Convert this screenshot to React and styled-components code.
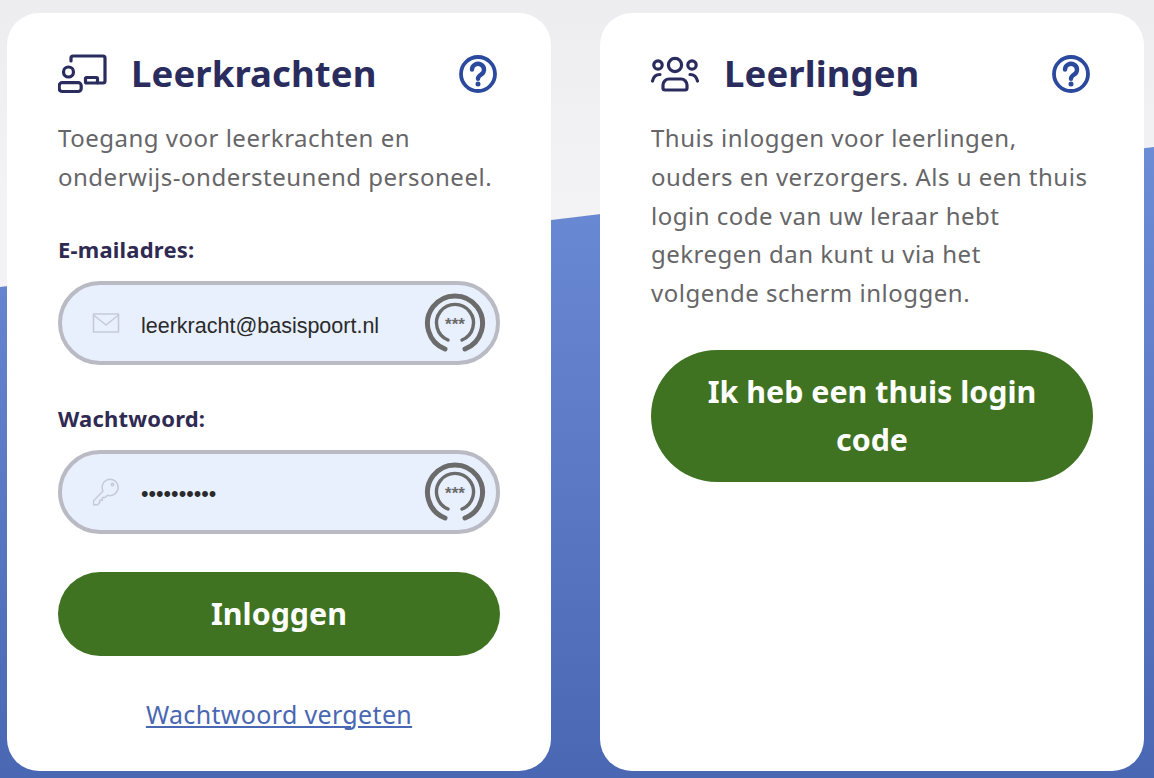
import React from "react";
import styled, { createGlobalStyle } from "styled-components";

const Global = createGlobalStyle`
  html, body { margin: 0; padding: 0; height: 100%; overflow: hidden; }
  * { box-sizing: border-box; }
  body { font-family: "Noto Sans", "Open Sans", sans-serif; background: #f1f1f4; }
`;

const Page = styled.main`
  position: relative;
  width: 1154px;
  height: 778px;
  padding: 13px 10px 7px 7px;
  display: grid;
  grid-template-columns: 544px 544px;
  column-gap: 49px;
  overflow: hidden;
  background: linear-gradient(180deg, #ededf0 0, #f3f3f6 200px);
  &::before {
    content: "";
    position: absolute;
    inset: 0;
    background: linear-gradient(180deg, #6d8cd6 147px, #4a67b3 778px);
    clip-path: polygon(0 287px, 1154px 147px, 1154px 778px, 0 778px);
  }
`;

const Card = styled.section`
  position: relative;
  background: #fff;
  border-radius: 32px;
  padding: 0 53px 0 51px;
  height: 758px;
`;

const Header = styled.header`
  height: 106px;
  display: flex;
  align-items: center;
  padding-top: 16px;
`;

const IconSlot = styled.span`
  width: 73px;
  flex: none;
  display: flex;
`;

const Title = styled.h2`
  flex: 1;
  margin: -2px 0 0;
  font-size: 36.5px;
  font-weight: 700;
  color: #2a2c5e;
  white-space: nowrap;
  letter-spacing: 0.1px;
`;

const Text = styled.p`
  margin: 0;
  font-size: 24px;
  line-height: 38.8px;
  color: #666668;
  white-space: nowrap;
  letter-spacing: 0.5px;
`;

const Label = styled.label`
  display: block;
  font-size: 22px;
  font-weight: 700;
  line-height: 30px;
  color: #2f2a52;
  margin-bottom: 17px;
  margin-top: ${(p) => p.$mt}px;
  letter-spacing: 0.2px;
`;

const Field = styled.div`
  height: 84px;
  width: 442px;
  border: 4px solid #b9bac4;
  border-radius: 42px;
  background: #e8f0fe;
  display: flex;
  align-items: center;
  padding: 0 9px 0 30px;
`;

const Input = styled.input`
  flex: 1;
  min-width: 0;
  margin-left: 21px;
  border: 0;
  outline: 0;
  background: transparent;
  padding: ${(p) => p.$top}px 0 0;
  font-family: "Liberation Sans", Arial, sans-serif;
  font-size: 21.5px;
  color: #2a2a2a;
`;

const PrimaryButton = styled.button`
  display: block;
  width: 442px;
  height: ${(p) => p.$h}px;
  margin-top: ${(p) => p.$mt}px;
  border: 0;
  border-radius: ${(p) => p.$h / 2}px;
  background: #3f7321;
  color: #fff;
  font-family: inherit;
  font-size: 30.4px;
  font-weight: 700;
  line-height: 48px;
  padding: 0 40px;
`;

const Forgot = styled.a`
  display: block;
  width: 442px;
  margin-top: 41px;
  text-align: center;
  font-size: 25px;
  line-height: 34px;
  letter-spacing: 0.34px;
  color: #4a67b3;
  text-decoration: underline;
  text-underline-offset: 2px;
  text-decoration-thickness: 1.5px;
`;

const Teacher = () => (
  <svg width="50" height="40" viewBox="0.5 0 50 40" fill="none" stroke="#2a2c5e" strokeWidth="3.2" strokeLinecap="round" strokeLinejoin="round">
    <path d="M13.5 7V4a2 2 0 0 1 2-2h30a2 2 0 0 1 2 2v23a2 2 0 0 1-2 2h-5" />
    <rect x="28" y="23.5" width="12" height="5.5" rx="1" />
    <circle cx="11" cy="18" r="5" />
    <rect x="1.7" y="28.7" width="22" height="8.8" rx="3" />
  </svg>
);

const People = () => (
  <svg width="50" height="40" viewBox="1 0 50 40" fill="none" stroke="#2a2c5e" strokeWidth="3.2" strokeLinecap="round" strokeLinejoin="round">
    <circle cx="25" cy="11" r="6.6" />
    <circle cx="8" cy="11" r="4.2" />
    <circle cx="42" cy="11" r="4.2" />
    <path d="M15 36h20a2 2 0 0 0 2-2v-3a6 6 0 0 0-6-6H19a6 6 0 0 0-6 6v3a2 2 0 0 0 2 2z" />
    <path d="M2.5 27c1-4.5 3.5-6.5 7.5-6.5" />
    <path d="M47.5 27c-1-4.5-3.5-6.5-7.5-6.5" />
  </svg>
);

const Help = () => (
  <svg width="40" height="40" viewBox="0 0 40 40" fill="none" stroke="#2b4a9e">
    <circle cx="20" cy="20" r="17" strokeWidth="3.8" />
    <path d="M14 15.5a6 5.8 0 1 1 9.3 4.9c-2.2 1.4-3.3 2.3-3.3 4.4" strokeWidth="4.4" strokeLinecap="round" />
    <circle cx="20" cy="30" r="2.5" fill="#2b4a9e" stroke="none" />
  </svg>
);

const Mail = () => (
  <svg width="28" height="20" viewBox="0 0 28 20" fill="none" stroke="#c6cad8" strokeWidth="1.6" strokeLinejoin="round" style={{ flex: "none" }}>
    <rect x="1.5" y="1" width="25" height="18" />
    <path d="M1.5 2l12.5 10L26.5 2" />
  </svg>
);

const Key = () => (
  <svg width="28" height="28" viewBox="0 0 28 28" fill="none" stroke="#c6cad8" strokeWidth="1.5" strokeLinejoin="round" style={{ flex: "none" }}>
    <path d="M18 1.2a8.2 8.2 0 1 1-2.6 16L13 19.6h-2.6v2.6H7.7v2.4L5.6 26.7H1.6v-4L11 13a8.2 8.2 0 0 1 7-11.8z" />
    <circle cx="20.5" cy="6.5" r="1.2" />
  </svg>
);

const Reveal = () => (
  <svg width="64" height="64" viewBox="0 0 64 64" fill="none" stroke="#6b6b6b" strokeLinecap="round" style={{ flex: "none" }}>
    <path d="M22 58a27.5 27.5 0 1 1 20 0" strokeWidth="5" />
    <path d="M25 49a18.5 18.5 0 1 1 14 0" strokeWidth="3.4" />
    <text x="32" y="39" textAnchor="middle" fontFamily="Liberation Sans, sans-serif" fontWeight="700" fontSize="17" fill="#6b6b6b" stroke="none">***</text>
  </svg>
);

export default function App() {
  return (
    <>
      <Global />
      <Page>
        <Card>
          <Header>
            <IconSlot><Teacher /></IconSlot>
            <Title>Leerkrachten</Title>
            <Help />
          </Header>
          <Text>
            Toegang voor leerkrachten en
            <br />
            onderwijs-ondersteunend personeel.
          </Text>
          <Label $mt={37}>E-mailadres:</Label>
          <Field>
            <Mail />
            <Input readOnly $top={7} value="leerkracht@basispoort.nl" />
            <Reveal />
          </Field>
          <Label $mt={38}>Wachtwoord:</Label>
          <Field>
            <Key />
            <Input readOnly $top={5} type="password" value="wachtwoord" />
            <Reveal />
          </Field>
          <PrimaryButton $h={84} $mt={38}>Inloggen</PrimaryButton>
          <Forgot href="#">Wachtwoord vergeten</Forgot>
        </Card>
        <Card>
          <Header>
            <IconSlot><People /></IconSlot>
            <Title>Leerlingen</Title>
            <Help />
          </Header>
          <Text>
            Thuis inloggen voor leerlingen,
            <br />
            ouders en verzorgers. Als u een thuis
            <br />
            login code van uw leraar hebt
            <br />
            gekregen dan kunt u via het
            <br />
            volgende scherm inloggen.
          </Text>
          <PrimaryButton $h={132} $mt={37}>Ik heb een thuis login code</PrimaryButton>
        </Card>
      </Page>
    </>
  );
}
